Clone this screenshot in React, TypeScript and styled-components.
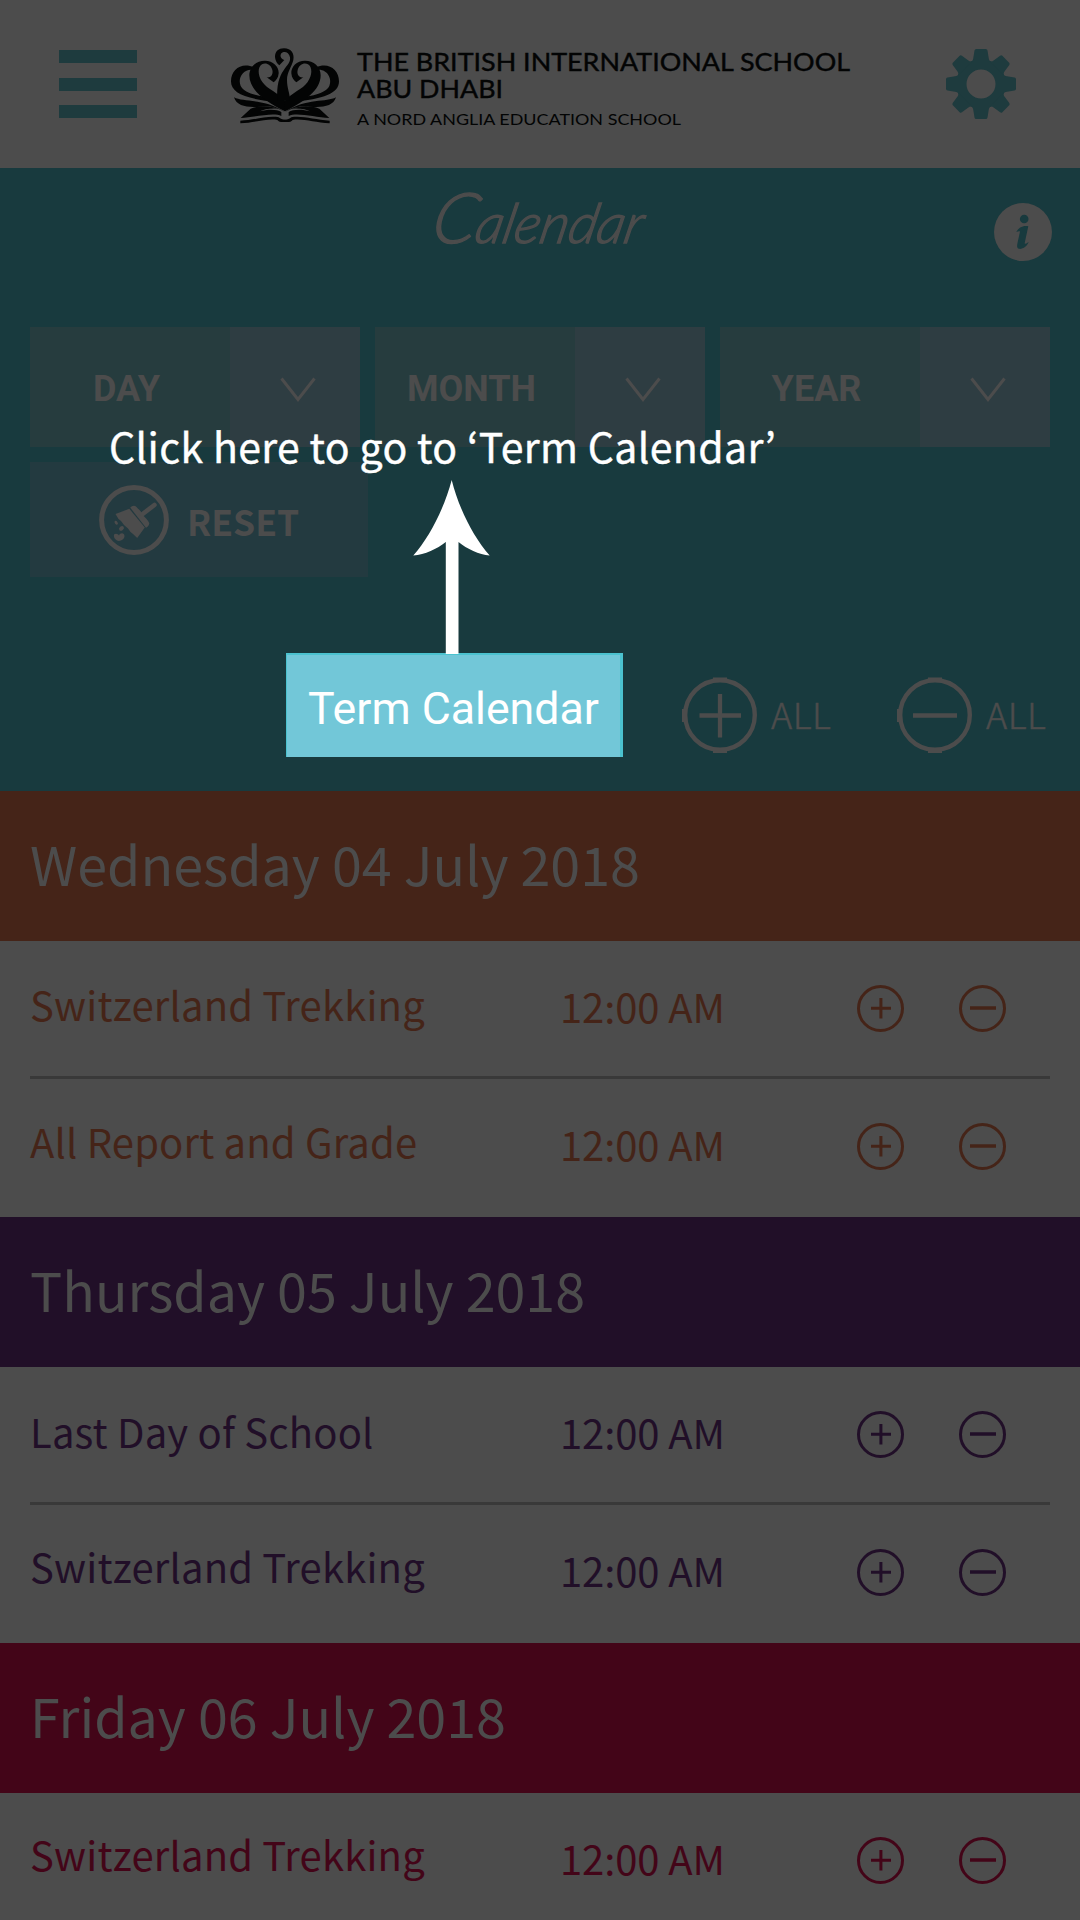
import React from 'react';
import styled, { createGlobalStyle } from 'styled-components';

const SOURCE = '"Noto Sans CJK KR", "Noto Sans", sans-serif';
const ROBOTO = 'Roboto, "Liberation Sans", sans-serif';
const GREY = '#4c4c4c';
const TEAL = '#183a3e';

const GlobalStyle = createGlobalStyle`
  *, *::before, *::after { box-sizing: border-box; }
  body { margin: 0; background: ${GREY}; }
`;

const Screen = styled.div`
  position: relative;
  width: 1080px;
  height: 1920px;
  overflow: hidden;
  display: flex;
  flex-direction: column;
  background: ${GREY};
  font-family: ${SOURCE};
`;

const TopBar = styled.header`
  flex: none;
  height: 168px;
  padding: 0 64px 0 59px;
  display: flex;
  align-items: center;
  justify-content: space-between;
`;

const MenuButton = styled.div`
  width: 78px;
  height: 68px;
  display: flex;
  flex-direction: column;
  justify-content: space-between;
`;

const MenuBar = styled.span`
  height: 13px;
  background: #1e3b3e;
`;

const LogoSlot = styled.div`
  width: 650px;
  margin: 2px auto 0 73px;
`;

const Art = styled.svg`
  display: block;
  flex: none;
`;

const FilterPanel = styled.section`
  flex: none;
  height: 623px;
  background: ${TEAL};
  display: flex;
  flex-direction: column;
`;

const TitleRow = styled.div`
  height: 159px;
  padding: 35px 28px 0 30px;
  display: grid;
  grid-template-columns: 58px 1fr 58px;
  align-items: start;
`;

const Title = styled.h1`
  margin: -27px 0 0 -4px;
  justify-self: center;
  font: italic 300 55px/80px Lato, sans-serif;
  color: ${GREY};
  -webkit-text-stroke: 1.4px ${GREY};
  transform: skewX(-12deg);

  &::first-letter {
    font-size: 70px;
    line-height: 80px;
  }
`;

const Filters = styled.div`
  display: flex;
  gap: 15px;
  padding: 0 30px;
`;

const Select = styled.div`
  flex: 1;
  height: 120px;
  display: flex;
`;

const SelectLabel = styled.div`
  width: 200px;
  padding: 4px 7px 0 0;
  display: flex;
  align-items: center;
  justify-content: center;
  background: #263c3e;
  color: ${GREY};
  font: 700 36px/44px ${ROBOTO};
`;

const SelectArrow = styled.div`
  flex: 1;
  display: flex;
  align-items: center;
  justify-content: center;
  padding: 5px 0 0 6px;
  background: #2e3d42;
`;

const ResetButton = styled.div`
  width: 338px;
  height: 115px;
  margin: 15px 0 0 30px;
  padding-left: 69px;
  display: flex;
  align-items: center;
  gap: 18px;
  background: #233a40;
`;

const ResetLabel = styled.span`
  margin-top: 3px;
  color: ${GREY};
  font: 700 35.5px/50px ${SOURCE};
`;

const Actions = styled.div`
  height: 104px;
  margin-top: 76px;
  padding-left: 286px;
  display: flex;
`;

const TermButton = styled.div`
  width: 337px;
  height: 104px;
  padding-top: 5px;
  display: flex;
  align-items: center;
  justify-content: center;
  background: #72c7d8;
  border: solid #4bc2cf;
  border-width: 2px 3px 0 1px;
  color: #fff;
  font: 400 44.7px/60px ${ROBOTO};
  white-space: nowrap;
`;

const AllToggle = styled.div<{ $start: number }>`
  margin-left: ${(p) => p.$start}px;
  width: 158px;
  display: flex;
  align-items: center;
  gap: 13px;
  padding-top: 21px;
`;

const AllLabel = styled.span`
  padding-bottom: 6px;
  color: ${GREY};
  font: 300 36px/50px ${SOURCE};
  letter-spacing: 0.5px;
  -webkit-text-stroke: 0.5px ${GREY};
`;

const DayBar = styled.h2<{ $color: string }>`
  flex: none;
  height: 150px;
  margin: 0;
  padding: 0 0 7px 30px;
  display: flex;
  align-items: center;
  background: ${(p) => p.$color};
  color: ${GREY};
  font: 400 53.8px/80px ${SOURCE};
  white-space: nowrap;
`;

const EventList = styled.div`
  flex: none;
  height: 276px;
  padding: 0 30px;
`;

const EventRow = styled.div<{ $color: string }>`
  height: 138px;
  padding-bottom: 3px;
  display: grid;
  grid-template-columns: 530px 297px 102px 1fr;
  align-items: center;
  color: ${(p) => p.$color};
  font: 400 40px/60px ${SOURCE};
  white-space: nowrap;

  &:not(:last-child) {
    padding-bottom: 0;
    border-bottom: 3px solid #393939;
  }
`;

const EventName = styled.span<{ $lift: number }>`
  padding-bottom: ${(p) => p.$lift * 2}px;
  letter-spacing: 0.17px;
`;

const EventTime = styled.span`
  padding-bottom: 6px;
  letter-spacing: -0.1px;
`;

const Hint = styled.div`
  position: absolute;
  left: 109px;
  top: 415px;
  color: #fff;
  font: 400 41px/60px ${SOURCE};
  letter-spacing: 0.35px;
  -webkit-text-stroke: 0.4px #fff;
  white-space: nowrap;
`;

const HintArrow = styled.svg`
  position: absolute;
  left: 413px;
  top: 480px;
`;

function CrownHalf() {
  return (
    <>
      <path d="M132 112 C95 96 63 118 63 154 C63 190 108 208 205 216 L200 204 C150 200 104 192 92 168 C82 144 100 118 124 119 Z" />
      <path d="M225 244 C165 215 118 180 118 136 C118 110 139 92 165 92 C190 92 207 110 206 130 C205 144 198 152 191 157 L170 142 C184 144 190 132 187 120 C183 104 168 97 156 103 C142 112 143 136 157 156 C172 178 205 188 225 212 Z" />
      <path d="M72 202 C100 218 160 203 225 246 C200 232 175 226 150 230 C115 233 80 230 72 202 Z" />
      <path d="M92 264 L122 236 C150 224 185 228 204 236 C180 234 160 238 150 244 C175 236 202 238 214 246 L214 258 C190 246 135 262 92 264 Z" />
      <path d="M91 272 C135 270 175 256 206 262 C212 267 216 269 226 269 L226 276 C214 277 207 276 202 270 C175 264 135 278 91 280 Z" />
    </>
  );
}

function Logo() {
  return (
    <Art width="650" height="110" viewBox="0 0 650 110" fill="#030404">
      <g transform="scale(.33333)">
        <CrownHalf />
        <g transform="translate(450 0) scale(-1 1)">
          <CrownHalf />
        </g>
        <path d="M208 106 C190 92 188 55 222 55 C244 55 254 71 250 90 C245 112 231 125 231 150 C231 175 240 190 240 212 L202 212 C199 165 208 140 220 122 C233 104 242 96 240 82 C237 66 222 62 214 70 C209 77 212 87 223 90 Z" />
      </g>
      <g fontFamily="Lato, sans-serif">
        <text x="147" y="40.5" fontSize="24.4" stroke="#030404" strokeWidth=".4" textLength="493" lengthAdjust="spacingAndGlyphs">
          THE BRITISH INTERNATIONAL SCHOOL
        </text>
        <text x="147" y="67.5" fontSize="24.4" stroke="#030404" strokeWidth=".4" textLength="146" lengthAdjust="spacingAndGlyphs">
          ABU DHABI
        </text>
        <text x="147" y="94.5" fontSize="16.2" textLength="324" lengthAdjust="spacingAndGlyphs">
          A NORD ANGLIA EDUCATION SCHOOL
        </text>
      </g>
    </Art>
  );
}

function Gear() {
  return (
    <Art width="70" height="70" viewBox="-35 -35 70 70" fill="none">
      <circle r="19.5" stroke="#1e3b3e" strokeWidth="10" />
      <g fill="#1e3b3e">
        {[0, 45, 90, 135, 180, 225, 270, 315].map((a) => (
          <path
            key={a}
            transform={`rotate(${a})`}
            d="M-10.5 -22 C-8.5 -23 -8 -24 -7.7 -26 L-6.5 -33.5 Q-6.2 -35 -4.8 -35 L4.8 -35 Q6.2 -35 6.5 -33.5 L7.7 -26 C8 -24 8.5 -23 10.5 -22 Z"
          />
        ))}
      </g>
    </Art>
  );
}

function Info() {
  return (
    <Art width="58" height="58" viewBox="0 0 58 58">
      <circle cx="29" cy="29" r="29" fill={GREY} />
      <circle cx="30.2" cy="16" r="4.3" fill={TEAL} />
      <path
        fill={TEAL}
        d="M22.3 29 C24.5 24.5 29 22.2 34.3 23.2 L30.6 40.6 C32 41 33.3 40 34.6 39 C33.6 43 28.5 46.5 25 45.8 C22.6 45.2 23 42.5 23.5 40 L26 28.6 C25 27.8 24 28.6 22.3 29 Z"
      />
    </Art>
  );
}

function Brush() {
  return (
    <Art width="70" height="70" viewBox="0 0 70 70" fill={GREY}>
      <circle cx="35" cy="35" r="32.4" fill="none" stroke={GREY} strokeWidth="5" />
      <path d="M16.5 29 L30.3 23.7 L45.8 42.4 L38.2 53 L34 49 L31.5 47 L29 43.5 L25 40 L22 36 L19.5 34 Z" />
      <path d="M31.2 22.6 C33 20.5 35.5 19.8 37.5 22 C40 25 41.5 25.2 43 28.5 C44.5 31.5 49 34.5 50.2 38 C50.6 40 48.8 42 47 42.8 Z" />
      <path d="M43 29.5 L55.4 20" stroke={GREY} strokeWidth="4.6" strokeLinecap="round" />
      <ellipse cx="17.2" cy="37.7" rx="1.4" ry="2.2" transform="rotate(-35 17.2 37.7)" />
      <ellipse cx="22.5" cy="43.4" rx="2.7" ry="2" transform="rotate(-40 22.5 43.4)" />
      <path d="M15 49.5 C17 48 19 49 20 50.5 C21 47.5 25.5 47.5 25.5 51 C25.5 54.5 21 57 18 55.5 C15.5 54 14.5 52 15 49.5 Z" />
    </Art>
  );
}

function AllIcon({ plus }: { plus?: boolean }) {
  return (
    <Art width="77" height="77" viewBox="0 0 77 77" fill="none" stroke={GREY}>
      <circle cx="39" cy="38" r="34.8" strokeWidth="4.4" />
      <path d="M32 1.5 H46 M32 75 H46 M2 32 V45" strokeWidth="2" />
      {plus ? (
        <path d="M18.5 38.5 H60 M39 17 V60.5" strokeWidth="4.3" />
      ) : (
        <path d="M17 38.5 H61" strokeWidth="4.3" />
      )}
    </Art>
  );
}

function RowIcon({ plus }: { plus?: boolean }) {
  return (
    <Art width="47" height="47" viewBox="0 0 47 47" fill="none" stroke="currentColor">
      <circle cx="23.5" cy="23.5" r="22" strokeWidth="3" />
      {plus ? (
        <path d="M14 23.2 H34 M23.9 13 V33.5" strokeWidth="3" />
      ) : (
        <path d="M11 23 H37" strokeWidth="3.5" />
      )}
    </Art>
  );
}

const days = [
  {
    label: 'Wednesday 04 July 2018',
    color: '#452418',
    events: [
      { name: 'Switzerland Trekking', lift: 5 },
      { name: 'All Report and Grade', lift: 6 },
    ],
  },
  {
    label: 'Thursday 05 July 2018',
    color: '#210f28',
    events: [
      { name: 'Last Day of School', lift: 4 },
      { name: 'Switzerland Trekking', lift: 7 },
    ],
  },
  {
    label: 'Friday 06 July 2018',
    color: '#430518',
    events: [{ name: 'Switzerland Trekking', lift: 7 }],
  },
];

export default function App() {
  return (
    <Screen>
      <GlobalStyle />
      <TopBar>
        <MenuButton>
          <MenuBar />
          <MenuBar />
          <MenuBar />
        </MenuButton>
        <LogoSlot>
          <Logo />
        </LogoSlot>
        <Gear />
      </TopBar>
      <FilterPanel>
        <TitleRow>
          <span />
          <Title>Calendar</Title>
          <Info />
        </TitleRow>
        <Filters>
          {['DAY', 'MONTH', 'YEAR'].map((label) => (
            <Select key={label}>
              <SelectLabel>{label}</SelectLabel>
              <SelectArrow>
                <Art width="36" height="26" viewBox="0 0 36 26" fill="none" stroke={GREY} strokeWidth="3">
                  <path d="M1.5 1.5 L18 22.5 L34.5 1.5" />
                </Art>
              </SelectArrow>
            </Select>
          ))}
        </Filters>
        <ResetButton>
          <Brush />
          <ResetLabel>RESET</ResetLabel>
        </ResetButton>
        <Actions>
          <TermButton>Term Calendar</TermButton>
          <AllToggle $start={58}>
            <AllIcon plus />
            <AllLabel>ALL</AllLabel>
          </AllToggle>
          <AllToggle $start={57}>
            <AllIcon />
            <AllLabel>ALL</AllLabel>
          </AllToggle>
        </Actions>
      </FilterPanel>
      {days.map((day) => (
        <React.Fragment key={day.label}>
          <DayBar $color={day.color}>{day.label}</DayBar>
          <EventList>
            {day.events.map((event) => (
              <EventRow key={event.name} $color={day.color}>
                <EventName $lift={event.lift}>{event.name}</EventName>
                <EventTime>12:00 AM</EventTime>
                <RowIcon plus />
                <RowIcon />
              </EventRow>
            ))}
          </EventList>
        </React.Fragment>
      ))}
      <Hint>Click here to go to ‘Term Calendar’</Hint>
      <HintArrow width="77" height="174" viewBox="0 0 77 174" fill="#fff">
        <path d="M38.7 0 C45 26 60 57 76.7 75.5 C66 74.5 54 69 45.5 62 V174 H32.8 V62 C24 69 12 74.5 .3 75.5 C17 57 32 26 38.7 0 Z" />
      </HintArrow>
    </Screen>
  );
}
